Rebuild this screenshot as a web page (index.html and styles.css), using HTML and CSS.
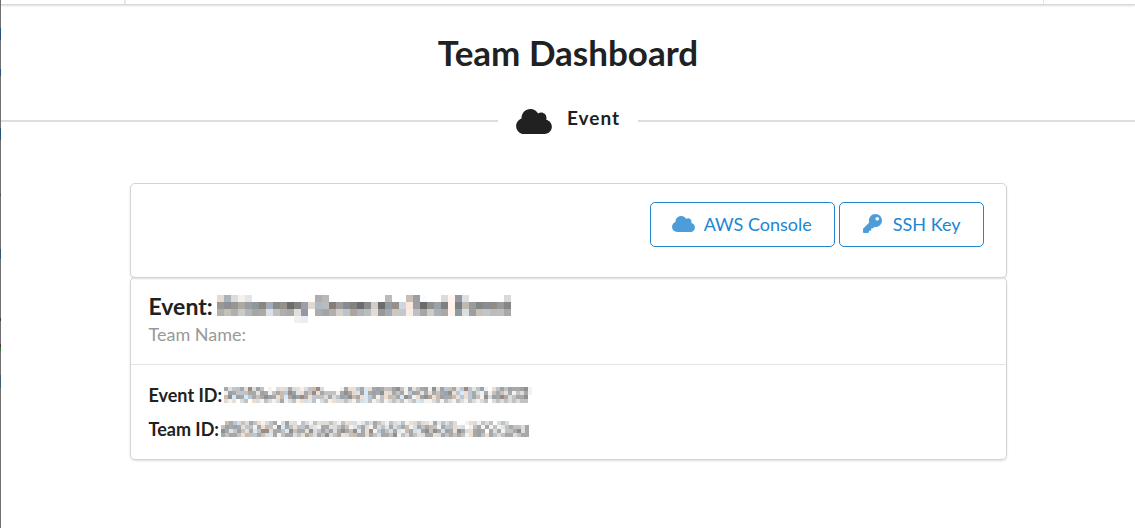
FILE: index.html
```html
<!DOCTYPE html>
<html lang="en">
<head>
<meta charset="utf-8">
<title>Team Dashboard</title>
<link rel="stylesheet" href="styles.css">
</head>
<body>
<svg class="sprite" aria-hidden="true">
  <symbol id="cloud" viewBox="0 0 640 448">
    <path d="M537.600 194.600c4.100-10.700 6.400-22.400 6.400-34.600 0-53-43-96-96-96-19.700 0-38.100 6-53.300 16.200C367 32.200 315.300 0 256 0c-88.400 0-160 71.600-160 160 0 2.700.1 5.400.2 8.100C40.200 187.800 0 241.200 0 304c0 79.500 64.500 144 144 144h368c70.700 0 128-57.300 128-128 0-61.900-44-113.600-102.400-125.400z"/>
  </symbol>
  <symbol id="key" viewBox="0 0 512 512">
    <path d="M512 176.001C512 273.203 433.202 352 336 352c-11.220 0-22.190-1.062-32.827-3.069l-24.012 27.014A23.999 23.999 0 0 1 261.223 384H224v40c0 13.255-10.745 24-24 24h-40v40c0 13.255-10.745 24-24 24H24c-13.255 0-24-10.745-24-24v-78.059c0-6.365 2.529-12.470 7.029-16.971l161.802-161.802C163.108 213.814 160 195.271 160 176 160 78.798 238.797.001 335.999 0 433.488-.001 512 78.511 512 176.001zM336 128c0 26.510 21.490 48 48 48s48-21.490 48-48-21.490-48-48-48-48 21.490-48 48z"/>
  </symbol>
</svg>

<nav class="topbar"><span class="topbar-item"></span><span class="topbar-fill"></span><span class="topbar-end"></span></nav>

<main>
  <h1 class="title">Team Dashboard</h1>
  <h2 class="divider">
    <svg class="divider-icon" aria-hidden="true"><use href="#cloud"/></svg>
    <span>Event</span>
  </h2>

  <div class="panel">
    <section class="box actions">
      <button class="button" type="button"><svg class="icon-cloud" aria-hidden="true"><use href="#cloud"/></svg>AWS Console</button>
      <button class="button" type="button"><svg class="icon-key" aria-hidden="true"><use href="#key"/></svg>SSH Key</button>
    </section>
    <section class="box">
      <header class="summary">
        <h3 class="event-name">Event: <svg class="mosaic" data-mosaic="name" role="img" aria-label="Hidden event name"></svg></h3>
        <p class="team-name">Team Name:</p>
      </header>
      <div class="details">
        <p class="detail">Event ID: <svg class="mosaic" data-mosaic="eventId" role="img" aria-label="Hidden event ID"></svg></p>
        <p class="detail">Team ID: <svg class="mosaic" data-mosaic="teamId" role="img" aria-label="Hidden team ID"></svg></p>
      </div>
    </section>
  </div>
</main>
<script src="mosaic.js"></script>
</body>
</html>
```

FILE: styles.css
```css
* { box-sizing: border-box; }

body {
  margin: 0;
  min-height: 100vh;
  padding-left: 1px;
  color: #212121;
  background: #fff linear-gradient(#707070 0 28px, #24527c 28px 40px, #707070 40px 69px, #24527c 69px 76px, #707070 76px 97px, #4a7a7c 97px 99px, #707070 99px 128px, #24527c 128px 140px, #707070 140px 194px, #34557c 194px 196px, #707070 196px 249px, #34557c 249px 259px, #707070 259px 318px, #404040 318px 321px, #707070 321px 344px, #40363c 344px 347px, #3e7040 347px 351px, #707070 351px 375px, #3e6070 375px 388px, #707070 388px) no-repeat left top / 1px 100%;
  font: 18px/26px Lato, "Liberation Sans", sans-serif;
}

h1, h2, h3, p { margin: 0; }

.sprite { display: none; }

.topbar {
  display: flex;
  height: 5px;
  border-bottom: 1px solid #dadada;
  box-shadow: 0 1px 2px rgba(34, 36, 38, .15);
}
.topbar-item { width: 125px; border-right: 2px solid #e6e6e6; }
.topbar-fill { flex: 1; }
.topbar-end { width: 92px; border-left: 1px solid #e8e8e8; }

.title {
  padding-top: 24px;
  font-size: 35px;
  line-height: 46px;
  text-align: center;
}

.divider {
  display: flex;
  align-items: center;
  margin-top: 30px;
  font-size: 19px;
  line-height: 26px;
  letter-spacing: 1px;
}
.divider::before, .divider::after {
  content: "";
  flex: 1;
  height: 2px;
  background: #dedede;
}
.divider span { padding: 0 18px 6px 15px; }
.divider-icon {
  width: 36px;
  height: 25px;
  margin-left: 18px;
  fill: currentColor;
}

.panel {
  width: calc(100% - 40px);
  max-width: 877px;
  margin: 46px auto 40px;
}
.box {
  border: 1px solid #d4d4d5;
  border-radius: 5px;
  box-shadow: 0 1px 2px rgba(34, 36, 38, .15);
}
.box + .box { margin-top: -1px; }

.actions {
  display: flex;
  justify-content: flex-end;
  gap: 4px;
  padding: 18px 22px 30px;
}
.button {
  display: flex;
  align-items: center;
  height: 45px;
  padding: 0 22px 2px 21px;
  border: 1px solid #2185d0;
  border-radius: 5px;
  background: #fff;
  color: #2185d0;
  font: inherit;
}
.button svg { fill: #4d9ddb; }
.icon-cloud { width: 23px; height: 16px; margin-right: 9px; }
.icon-key { width: 19px; height: 19px; margin: 0 11px 0 2px; }

.summary {
  padding: 13px 18px 16px;
  border-bottom: 1px solid #e6e6e6;
}
.event-name {
  display: flex;
  gap: 4px;
  font-size: 23px;
  line-height: 30px;
}
.event-name .mosaic { margin: 4px 0 -2px; }
.team-name { line-height: 27px; color: #999; }

.details { padding: 13px 18px; }
.detail {
  display: flex;
  align-items: center;
  gap: 2px;
  line-height: 34px;
  font-weight: bold;
}
.mosaic { flex: none; shape-rendering: crispEdges; }
```

FILE: mosaic.js
```js
// Pixelated blocks that stand in for hidden values.
const palette = {
  w: "#f2f2f0", l: "#dcdcdc", g: "#c2c2c2", m: "#a8a8a8", d: "#909090", b: "#d8e8f4",
  p: "#b8c8d8", s: "#9aa2ac", c: "#ecdfd2", t: "#ccbaac", n: "#9c8a82"
};
const ids = {
  eventId: [
    "mcpgmcnlsg.w.lclmlcwlgtnl....wmccpmbcmsmgtsdgwscgmswdcspgmcpngbgsw.cgsgsmmsdw",
    "wsmgpgmmcsmwgmtpnsbcmgdcmgggwmdmlcsbmsmdclmgmwpsmcmcmgmsdcpbcpmlwmwgmgcmwglmw",
    "tdbsmbpmgmdsmctbmdsnmcpgglmlgsmdtmcbpmwgctgmbdmwcsdmctsmmtcpcpmgwdlsmnmlgmmd.",
    "lwc.lg.clwglwlmwlgwclbg.lgwcllglwglbgwlgwlglgwlgblwwlgwglwglwglwlg.lglglglgg."
  ],
  teamId: [
    ".tmplglmgcwlgm.lscl.glwgcllglwgcllwbglmglwglbgwclglcwmbglgl..wclwglg.lgl.....",
    "gsmsmcpgwmctgwdbmgcgpmlbwmmclgmgwbgmlwmlgbmlgmgwlmgmtgwmpglbl.wgmwmwgwbgmgglm",
    "dmcpsgcmbgndlmmgbdgmmcdlgsgslmdmtdbmcnwpmglmbwtmlbsdgdmlsmcnmlcmsm.mlmwggmnlm",
    "mgmmgctgpmglbmwgmmlgcmglmgdlgmclgtmmlmglmmgdwglmgclmmclmgmgmgwcmsgcmglgmmlgmm"
  ]
};
const name = [
  "e3dcd6 a9b3bd dcdcdc f4f2ec e0e6ea . . . . . . . . fffcfa b0adab b8b8b8 . . . . . . . . bbbbbb . . c8beb8 9a9ea2 f8fcff . . dcdcdc fff4ee 929a9f dde1e4 . . . . . d9d9d9",
  "9c9793 8f8f94 969696 aea8a2 9a9ea0 909699 8c857d a2adb8 8a8a86 96908c 6c6c6c 828282 9b9fa5 e2d8d2 b0bac6 bbbbbb 857e76 9c9c9c 848b94 86807c 6b6c6e 8b8b8b cfcdcb 6e6b69 9098a0 979089 d0d5df f5e9df 9c9fa2 6b6b6b 909090 9ba2a8 808080 fff4ec 788087 c2b8b2 999b9c 848683 858d97 928c88 989a97 848688",
  "b0b0b0 c5c0b8 b0b0b0 cacbc8 b0b6ba a6a6a6 b0a8a2 d8e0e8 c0c0c0 b0aeac a8a8a8 e0dfdc 9398a4 . acacac a2a5a8 b6afa9 d3cfca bcc4c8 aca4a0 b0b4b8 b8bdc0 e3dad2 989898 a3a9b4 cec8c2 c4c8ce f8ece4 bcc0c4 a6a6a6 cccccc aab0b4 a8a8a8 fff4ec 909a9f dcdfe2 9c9ea0 c7c0ba c2c6ca bcbcbc bebebe a8a8a8",
  ". . . . . . . . . . . f3f1ef eaedf4"
].map(row => row.split(" ").map(c => c === "." ? null : "#" + c));

function draw(key, rows, size) {
  const svg = document.querySelector(`[data-mosaic="${key}"]`);
  svg.setAttribute("width", rows[0].length * size);
  svg.setAttribute("height", rows.length * size);
  rows.forEach((row, y) => row.forEach((color, x) => {
    if (!color) return;
    const cell = document.createElementNS("http://www.w3.org/2000/svg", "rect");
    const box = { x: x * size, y: y * size, width: size, height: size, fill: color };
    for (const k in box) cell.setAttribute(k, box[k]);
    svg.append(cell);
  }));
}

draw("name", name, 7);
for (const key in ids) {
  draw(key, ids[key].map(row => [...row].map(c => palette[c])), 4);
}
```
